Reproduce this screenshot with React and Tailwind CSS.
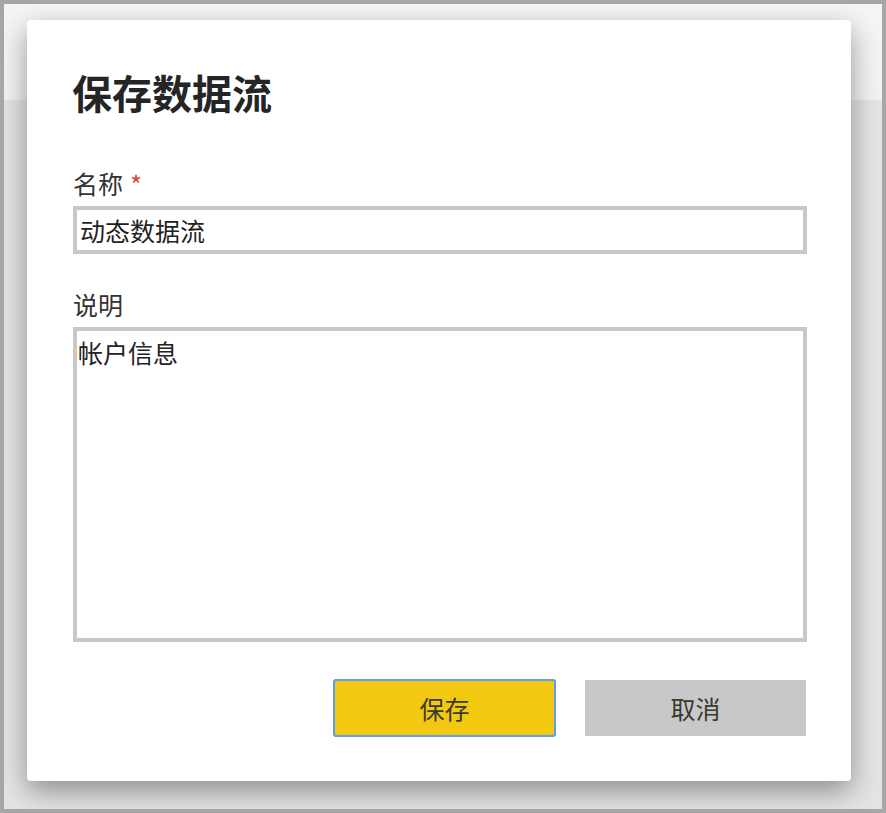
export default function App() {
  const font = { fontFamily: '"Noto Sans CJK SC", "Noto Sans", sans-serif' };
  return (
    <div className="w-[886px] h-[813px] border-4 border-[#a6a6a6] overflow-hidden" style={font}>
      <div className="w-full h-full bg-[linear-gradient(to_bottom,#f5f5f5_0px,#f2f2f2_96px,#e4e4e4_96px,#e4e4e4_100%)] pl-[23px] pt-[16px]">
        <div className="w-[824px] h-[761px] bg-white rounded-[4px] shadow-[0_10px_28px_rgba(0,0,0,0.38)] pl-[46px] pr-[44px] pt-[48px] flex flex-col">
          <div className="h-[48px] flex items-center text-[40px] font-bold text-[#252525] leading-none -ml-[1px]">
            保存数据流
          </div>
          <div className="mt-[51px] h-[32px] flex items-center text-[25px] text-[#333333] leading-none">
            <span>名称</span>
            <span className="ml-[7px] text-[26px] text-[#e8443a] leading-none self-start mt-[4px]">*</span>
          </div>
          <div className="mt-[7px] h-[48px] border-4 border-[#c8c8c8] flex items-center pl-[3px] text-[25px] text-[#222222] leading-none">
            动态数据流
          </div>
          <div className="mt-[34px] h-[32px] flex items-center text-[25px] text-[#333333] leading-none">
            说明
          </div>
          <div className="mt-[7px] h-[315px] border-4 border-[#c8c8c8] pl-[1px] pt-[6px] text-[25px] text-[#222222] leading-[30px]">
            帐户信息
          </div>
          <div className="mt-[37px] flex justify-end items-center gap-[29px] mr-[1px]">
            <button className="w-[223px] h-[58px] bg-[#f2c811] border-2 border-[#5c9ef5] rounded-[3px] text-[25px] text-[#3a3a30] leading-none flex items-center justify-center">
              保存
            </button>
            <button className="w-[221px] h-[56px] bg-[#c8c8c8] text-[25px] text-[#3a3a30] leading-none flex items-center justify-center">
              取消
            </button>
          </div>
        </div>
      </div>
    </div>
  );
}
